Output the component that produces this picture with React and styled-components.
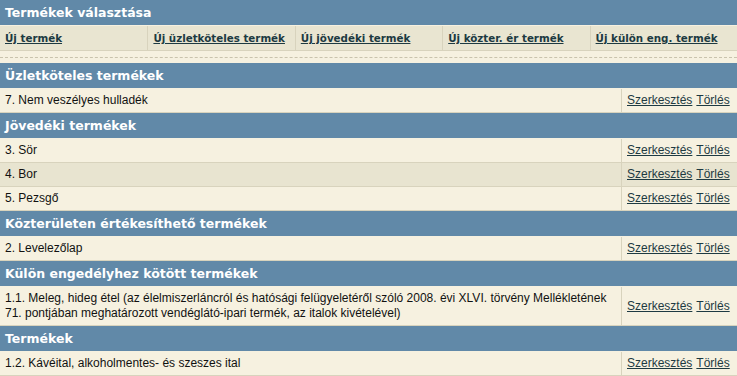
import React from "react";
import styled, { createGlobalStyle } from "styled-components";

const GlobalStyle = createGlobalStyle`
  html, body { margin: 0; padding: 0; background: #f6f1e0; }
  body { font-family: "Liberation Sans", Arial, sans-serif; font-size: 12px; color: #111; }
`;

const BLUE = "#6189a8";
const LINE = "#d8d3bd";

const Page = styled.div`
  width: 737px;
  background: #f6f1e0;
`;

const Bar = styled.div`
  background: ${BLUE};
  color: #fff;
  font-family: "DejaVu Sans", Verdana, sans-serif;
  font-weight: bold;
  font-size: 12.5px;
  height: 25px;
  padding: 0 5px;
  display: flex;
  align-items: center;
  border-bottom: 1px solid #f6f1e0;
`;

const NavRow = styled.div`
  display: grid;
  grid-template-columns: repeat(5, 1fr);
  background: #e9e5d1;
  border-bottom: 1px solid ${LINE};
  height: 24px;
`;

const NavCell = styled.div`
  display: flex;
  align-items: center;
  padding: 0 5px;
  border-left: ${(p) => (p.$first ? "none" : `1px solid ${LINE}`)};
`;

const NavLink = styled.a`
  font-family: "DejaVu Sans", Verdana, sans-serif;
  font-weight: bold;
  font-size: 10.3px;
  color: #1d3a42;
  text-decoration: underline;
  white-space: nowrap;
`;

const Divider = styled.div`
  margin: 6px 0 5px;
  border-top: 1px dashed #c9c3ad;
`;

const Row = styled.div`
  display: grid;
  grid-template-columns: 1fr 116px;
  background: ${(p) => (p.$alt ? "#e8e4d0" : "#f6f1e0")};
  border-bottom: 1px solid ${LINE};
`;

const NameCell = styled.div`
  padding: 4px 5px;
  line-height: 15px;
  display: flex;
  align-items: center;
`;

const ActionCell = styled.div`
  padding: 4px 5px;
  line-height: 15px;
  border-left: 1px solid ${LINE};
  display: flex;
  align-items: center;
  gap: 4px;
  white-space: nowrap;
`;

const ActionLink = styled.a`
  color: #1d3a42;
  text-decoration: underline;
`;

const navItems = [
  "Új termék",
  "Új üzletköteles termék",
  "Új jövedéki termék",
  "Új közter. ér termék",
  "Új külön eng. termék",
];

const sections = [
  { title: "Üzletköteles termékek", items: ["7. Nem veszélyes hulladék"] },
  { title: "Jövedéki termékek", items: ["3. Sör", "4. Bor", "5. Pezsgő"] },
  { title: "Közterületen értékesíthető termékek", items: ["2. Levelezőlap"] },
  {
    title: "Külön engedélyhez kötött termékek",
    items: [
      "1.1. Meleg, hideg étel (az élelmiszerláncról és hatósági felügyeletéről szóló 2008. évi XLVI. törvény Mellékletének 71. pontjában meghatározott vendéglátó-ipari termék, az italok kivételével)",
    ],
  },
  { title: "Termékek", items: ["1.2. Kávéital, alkoholmentes- és szeszes ital"] },
];

export default function App() {
  return (
    <Page>
      <GlobalStyle />
      <Bar>Termékek választása</Bar>
      <NavRow>
        {navItems.map((n, i) => (
          <NavCell key={n} $first={i === 0}>
            <NavLink href="#">{n}</NavLink>
          </NavCell>
        ))}
      </NavRow>
      <Divider />
      {sections.map((s) => (
        <div key={s.title}>
          <Bar>{s.title}</Bar>
          {s.items.map((it, i) => (
            <Row key={it} $alt={i % 2 === 1}>
              <NameCell>{it}</NameCell>
              <ActionCell>
                <ActionLink href="#">Szerkesztés</ActionLink>
                <ActionLink href="#">Törlés</ActionLink>
              </ActionCell>
            </Row>
          ))}
        </div>
      ))}
    </Page>
  );
}
